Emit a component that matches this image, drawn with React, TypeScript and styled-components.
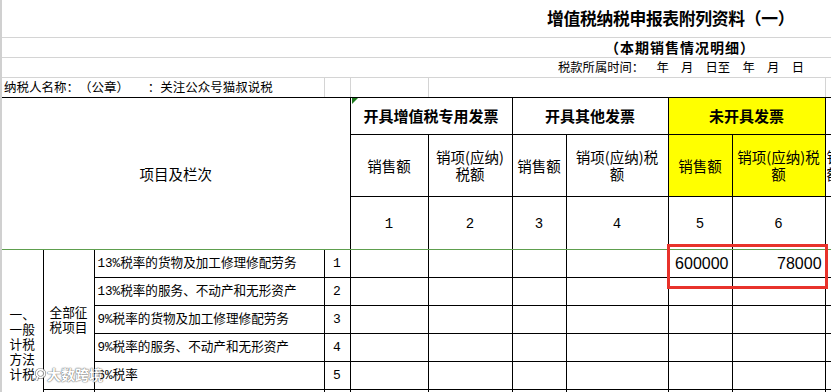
import React from "react";
import styled, { createGlobalStyle } from "styled-components";

const GlobalStyle = createGlobalStyle`
  html, body { margin: 0; padding: 0; overflow: hidden; background: #ffffff; }
  body {
    font-family: "Noto Sans CJK SC", "Liberation Sans", sans-serif;
    color: #000;
    text-spacing-trim: space-all;
  }
`;

const CJK = `"Noto Sans CJK SC", "Liberation Sans", sans-serif`;
const MONO = `"Liberation Mono", "Noto Sans CJK SC", monospace`;
const GRID = "#d4d4d4";
const INK = "#000000";

const Sheet = styled.div`
  position: relative;
  width: 831px;
  height: 392px;
  overflow: hidden;
  box-sizing: border-box;
  border-left: 2px solid #d0d0d0;
  background: #fff;
`;

const Grid = styled.table`
  border-collapse: collapse;
  table-layout: fixed;
  width: 903px;
`;

const Col = styled.col<{ $w: number }>`
  width: ${(p) => p.$w}px;
`;

const Row = styled.tr<{ $h: number }>`
  height: ${(p) => p.$h}px;
`;

/* rows above the form: sheet gridlines only */
const BannerCell = styled.td<{ $indent: number; $size: number; $bold?: boolean; $track?: number }>`
  padding: 0 0 0 ${(p) => p.$indent}px;
  border-bottom: 1px solid ${GRID};
  font-family: ${CJK};
  font-size: ${(p) => p.$size}px;
  font-weight: ${(p) => (p.$bold ? 700 : 400)};
  letter-spacing: ${(p) => p.$track ?? 0}px;
  line-height: 1;
  white-space: pre;
  vertical-align: middle;
`;

const BlankCell = styled.td`
  padding: 0;
  border-bottom: 1px solid ${GRID};
`;

const TaxpayerCell = styled.td`
  padding: 0 0 0 2px;
  border-right: 1px solid ${GRID};
  border-bottom: 1px solid ${INK};
  font-family: ${CJK};
  font-size: 12.5px;
  line-height: 1;
  white-space: pre;
  vertical-align: middle;
`;

const HeadCell = styled.td<{ $bold?: boolean; $yellow?: boolean; $open?: boolean }>`
  padding: 0;
  border: 1px solid ${INK};
  ${(p) => (p.$open ? "border-left: none;" : "")}
  background: ${(p) => (p.$yellow ? "#ffff00" : "#ffffff")};
  font-family: ${CJK};
  font-size: ${(p) => (p.$bold ? 15 : 14.5)}px;
  font-weight: ${(p) => (p.$bold ? 700 : 400)};
  line-height: 17px;
  text-align: center;
  vertical-align: middle;
  white-space: nowrap;
`;

const OverflowHead = styled(HeadCell)`
  text-align: left;
  padding-left: 1px;
`;

const IndexCell = styled.td<{ $size: number }>`
  padding: ${(p) => (p.$size > 13 ? "3px 0 0" : "0")};
  border: 1px solid ${INK};
  font-family: ${MONO};
  font-size: ${(p) => p.$size}px;
  line-height: 1;
  text-align: center;
  vertical-align: middle;
`;

const GroupCell = styled.td<{ $open?: boolean; $lift?: number }>`
  padding: 0 0 ${(p) => p.$lift ?? 0}px;
  border: 1px solid ${INK};
  ${(p) => (p.$open ? "border-left: none;" : "")}
  font-family: ${CJK};
  font-size: 12.7px;
  line-height: 15px;
  text-align: center;
  vertical-align: middle;
`;

const ItemCell = styled.td`
  padding: 2px 0 0 3px;
  border: 1px solid ${INK};
  font-family: ${MONO};
  font-size: 12.6px;
  line-height: 1;
  white-space: nowrap;
  overflow: hidden;
  vertical-align: middle;
`;

const DataCell = styled.td`
  padding: 2px 3px 0 0;
  border: 1px solid ${INK};
  font-family: "Liberation Sans", Arial, sans-serif;
  font-size: 16px;
  line-height: 1;
  text-align: right;
  vertical-align: middle;
`;

const FreezeLine = styled.div`
  position: absolute;
  left: -2px;
  right: 0;
  top: 249px;
  height: 1px;
  background: #5e9f4e;
`;

const CommentMark = styled.svg`
  position: absolute;
  left: 349px;
  top: 97px;
`;

const Highlight = styled.div`
  position: absolute;
  left: 665px;
  top: 244px;
  width: 161px;
  height: 45px;
  box-sizing: border-box;
  border: 3px solid #e8322b;
`;

const Watermark = styled.div`
  position: absolute;
  left: 33px;
  top: 365px;
  display: flex;
  align-items: center;
  gap: 1px;
  opacity: 0.85;
  pointer-events: none;
`;

const WatermarkText = styled.span`
  font-family: ${CJK};
  font-size: 14px;
  font-weight: 700;
  line-height: 18px;
  color: #ffffff;
  text-shadow: 0 0 1px #555, 0 0 1px #555, 0 0 2px rgba(0, 0, 0, 0.35);
`;

const colWidths = [41, 51, 230, 26, 78, 84, 54, 102, 64, 93, 80];

const items: { text: string; no: string; a?: string; b?: string }[] = [
  { text: "13%税率的货物及加工修理修配劳务", no: "1", a: "600000", b: "78000" },
  { text: "13%税率的服务、不动产和无形资产", no: "2" },
  { text: "9%税率的货物及加工修理修配劳务", no: "3" },
  { text: "9%税率的服务、不动产和无形资产", no: "4" },
  { text: "6%税率", no: "5" },
  { text: "即征即退货物及加工修理修配劳务", no: "6" },
  { text: "即征即退服务、不动产和无形资产", no: "7" },
];

const Lines: React.FC<{ lines: string[] }> = ({ lines }) => (
  <>
    {lines.map((l, i) => (
      <React.Fragment key={i}>
        {i > 0 && <br />}
        {l}
      </React.Fragment>
    ))}
  </>
);

export default function App() {
  return (
    <>
      <GlobalStyle />
      <Sheet>
        <Grid>
          <colgroup>
            {colWidths.map((w, i) => (
              <Col key={i} $w={w} />
            ))}
          </colgroup>
          <tbody>
            <Row $h={37}>
              <BannerCell colSpan={10} $indent={545} $size={16.8} $bold $track={-0.3}>
                增值税纳税申报表附列资料（一）
              </BannerCell>
              <BlankCell />
            </Row>
            <Row $h={20}>
              <BannerCell colSpan={10} $indent={603} $size={14} $bold $track={1}>
                （本期销售情况明细）
              </BannerCell>
              <BlankCell />
            </Row>
            <Row $h={20}>
              <BannerCell colSpan={10} $indent={556} $size={12.3}>
                {"税款所属时间：\u3000年\u3000月\u3000日至\u3000年\u3000月\u3000日"}
              </BannerCell>
              <BlankCell />
            </Row>
            <Row $h={20}>
              <TaxpayerCell colSpan={3}>
                {"纳税人名称：（公章）\u2002\u2002\u2002：关注公众号猫叔说税"}
              </TaxpayerCell>
              <TaxpayerCell />
              <TaxpayerCell />
              <TaxpayerCell colSpan={5} />
              <TaxpayerCell />
            </Row>

            <Row $h={37}>
              <HeadCell colSpan={4} rowSpan={3} $open>
                项目及栏次
              </HeadCell>
              <HeadCell colSpan={2} $bold>
                开具增值税专用发票
              </HeadCell>
              <HeadCell colSpan={2} $bold>
                开具其他发票
              </HeadCell>
              <HeadCell colSpan={2} $bold $yellow>
                未开具发票
              </HeadCell>
              <HeadCell $bold />
            </Row>
            <Row $h={62}>
              <HeadCell>销售额</HeadCell>
              <HeadCell>
                <Lines lines={["销项(应纳)", "税额"]} />
              </HeadCell>
              <HeadCell>销售额</HeadCell>
              <HeadCell>
                <Lines lines={["销项(应纳)税", "额"]} />
              </HeadCell>
              <HeadCell $yellow>销售额</HeadCell>
              <HeadCell $yellow>
                <Lines lines={["销项(应纳)税", "额"]} />
              </HeadCell>
              <OverflowHead>
                <Lines lines={["销项(应纳)税", "额"]} />
              </OverflowHead>
            </Row>
            <Row $h={53}>
              {["1", "2", "3", "4", "5", "6", "7"].map((n) => (
                <IndexCell key={n} $size={14}>
                  {n === "7" ? "" : n}
                </IndexCell>
              ))}
            </Row>

            {items.map((it, i) => (
              <Row key={it.no} $h={28}>
                {i === 0 && (
                  <GroupCell rowSpan={7} $open $lift={7}>
                    <Lines lines={["一、", "一般", "计税", "方法", "计税"]} />
                  </GroupCell>
                )}
                {i === 0 && (
                  <GroupCell rowSpan={5}>
                    <Lines lines={["全部征", "税项目"]} />
                  </GroupCell>
                )}
                {i === 5 && (
                  <GroupCell rowSpan={2}>
                    <Lines lines={["即征即", "退项目"]} />
                  </GroupCell>
                )}
                <ItemCell>{it.text}</ItemCell>
                <IndexCell $size={13}>{it.no}</IndexCell>
                <DataCell />
                <DataCell />
                <DataCell />
                <DataCell />
                <DataCell>{it.a}</DataCell>
                <DataCell>{it.b}</DataCell>
                <DataCell />
              </Row>
            ))}
          </tbody>
        </Grid>

        <FreezeLine />
        <CommentMark width="7" height="7" viewBox="0 0 7 7">
          <polygon points="1,1 7,1 1,7" fill="#1e7a1e" />
        </CommentMark>
        <Highlight />
        <Watermark>
          <svg width="11" height="13" viewBox="0 0 11 13">
            <circle cx="5.5" cy="5.5" r="4" fill="none" stroke="#666" strokeWidth="3" />
            <circle cx="5.5" cy="5.5" r="4" fill="none" stroke="#ffffff" strokeWidth="1.8" />
            <path d="M2.5 9 L1.5 12.5" stroke="#666" strokeWidth="3" />
            <path d="M2.5 9 L1.5 12.5" stroke="#ffffff" strokeWidth="1.6" />
          </svg>
          <WatermarkText>大数跨境</WatermarkText>
        </Watermark>
      </Sheet>
    </>
  );
}
